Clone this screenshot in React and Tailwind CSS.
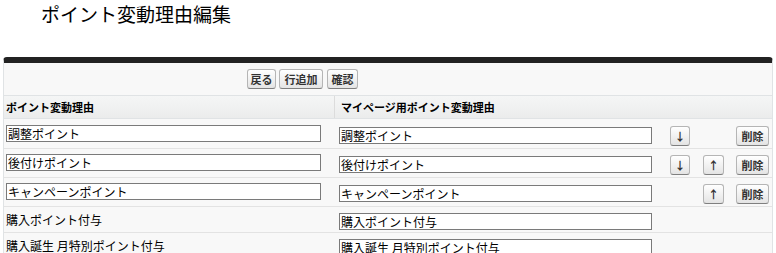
import React from "react";

const font = { fontFamily: '"Noto Sans CJK JP", "Noto Sans", sans-serif' };

const rows = [
  { name: "調整ポイント", mypage: "調整ポイント", editable: true, down: true, up: false, del: true, h: "h-[30px]" },
  { name: "後付けポイント", mypage: "後付けポイント", editable: true, down: true, up: true, del: true, h: "h-[29px]" },
  { name: "キャンペーンポイント", mypage: "キャンペーンポイント", editable: true, down: false, up: true, del: true, h: "h-[29px]" },
  { name: "購入ポイント付与", mypage: "購入ポイント付与", editable: false, h: "h-[26px]" },
  { name: "購入誕生 月特別ポイント付与", mypage: "購入誕生 月特別ポイント付与", editable: false, h: "h-[26px]" },
];

function Btn({ children, className = "" }) {
  return (
    <button
      type="button"
      className={`h-[20px] rounded-[3px] border border-[#b5b5b5] border-b-[#7f7f7f] bg-gradient-to-b from-white to-[#e4e4e4] px-0 text-[11px] font-bold leading-[16px] text-[#333] ${className}`}
    >
      {children}
    </button>
  );
}

function Field({ value, className = "" }) {
  return (
    <input
      readOnly
      value={value}
      className={`h-[17px] border border-[#7a7a7a] bg-white px-[1px] text-[12px] leading-[15px] text-black outline-none ${className}`}
    />
  );
}

export default function App() {
  return (
    <div className="w-[776px] h-[253px] overflow-hidden bg-white" style={font}>
      <div className="h-[57px] pl-[41px] pt-[2px]">
        <h1 className="text-[19px] leading-[24px] text-black">ポイント変動理由編集</h1>
      </div>

      <div className="mx-[3px] w-[770px] rounded-t-[4px] border-t-[6px] border-[#222] bg-[#f8f8f8] border-x border-x-[#e0e3e5]">
        <div className="flex h-[33px] border-b border-[#e0e3e5] pl-[243px] pt-[6px]">
          <Btn className="w-[29px]">戻る</Btn>
          <Btn className="ml-[3px] w-[44px]">行追加</Btn>
          <Btn className="ml-[4px] w-[31px]">確認</Btn>
        </div>

        <div className="flex h-[23px] items-center border-b border-[#e0e3e5] bg-gradient-to-b from-[#f5f6f6] to-[#ebecec] text-[11px] font-bold text-black">
          <div className="flex h-full w-[330px] items-center pl-[2px]">ポイント変動理由</div>
          <div className="flex h-full flex-1 items-center border-l border-[#dcdcdc] pl-[6px]">マイページ用ポイント変動理由</div>
        </div>

        {rows.map((r, i) => (
          <div key={i} className={`flex items-center border-b border-[#e3e3e3] ${r.h}`}>
            <div className="w-[330px] pl-[2px] text-[12px] text-black">
              {r.editable ? <Field value={r.name} className="w-[315px]" /> : <span className="leading-[17px]">{r.name}</span>}
            </div>
            <div className="w-[318px] pl-[5px]">
              <Field value={r.mypage} className="w-[313px]" />
            </div>
            {r.editable && (
              <div className="flex items-center">
                <div className="ml-[18px] w-[20px]">{r.down && <Btn className="w-[20px]">↓</Btn>}</div>
                <div className="ml-[13px] w-[21px]">{r.up && <Btn className="w-[21px]">↑</Btn>}</div>
                <div className="ml-[12px]">{r.del && <Btn className="w-[33px]">削除</Btn>}</div>
              </div>
            )}
          </div>
        ))}
      </div>
    </div>
  );
}
